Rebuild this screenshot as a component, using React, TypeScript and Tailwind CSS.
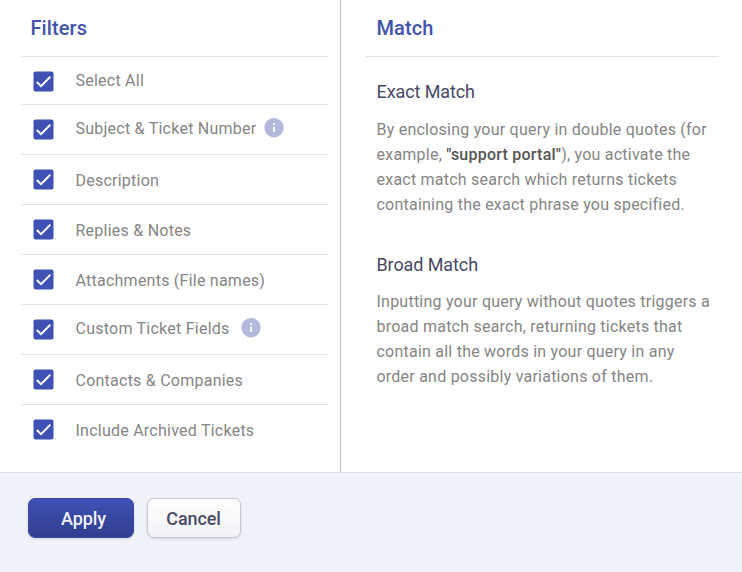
type Filter = { label: string; info?: string; row: string; text: string };

const filters: Filter[] = [
  { label: 'Select All', row: 'h-12 pt-px', text: '' },
  { label: 'Subject & Ticket Number', info: 'ml-2 mb-px', row: 'h-[50px]', text: 'pb-[2px]' },
  { label: 'Description', row: 'h-[50px]', text: 'pt-[2px]' },
  { label: 'Replies & Notes', row: 'h-[50px]', text: 'pt-[2px]' },
  { label: 'Attachments (File names)', row: 'h-[50px]', text: 'pt-[2px]' },
  { label: 'Custom Ticket Fields', info: 'ml-[11.5px] mb-px', row: 'h-[50px]', text: 'pb-[2px]' },
  { label: 'Contacts & Companies', row: 'h-[50px]', text: 'pt-[2px]' },
  { label: 'Include Archived Tickets', row: 'h-[50px]', text: 'pt-[2px]' },
];

function Checkbox() {
  return (
    <svg viewBox="0 0 21 21" className="size-[21px] shrink-0" fill="none">
      <rect x="0.5" y="0.5" width="20" height="20" rx="2" fill="#3f51b5" />
      <path d="M3.8 11L8 15.1L17.3 5.7" stroke="#fff" strokeWidth="2" />
    </svg>
  );
}

function InfoIcon({ className }: { className: string }) {
  return (
    <svg viewBox="0 0 20 20" className={`size-5 shrink-0 ${className}`}>
      <circle cx="10" cy="9.7" r="9.7" fill="#b3b9dd" />
      <path d="M9.1 5h1.8v1.8H9.1zM9.1 8.6h1.8v5.5H9.1z" fill="#fff" />
    </svg>
  );
}

export default function App() {
  return (
    <div className="flex h-[572px] w-[742px] flex-col overflow-hidden bg-white font-[Roboto,sans-serif] text-base text-[#858585]">
      <div className="flex h-[472px]">
        <section className="w-[341px] border-r border-[#bfbfbf] pr-3 pl-[21px]">
          <h2 className="h-[56px] pt-3.5 pl-[9.5px] text-xl leading-7 font-medium tracking-[0.1px] text-[#4353ab]">Filters</h2>
          <ul>
            {filters.map((f) => (
              <li key={f.label} className={`flex items-center border-t border-[#e3e3e3] pl-3 ${f.row}`}>
                <Checkbox />
                <div className={`flex items-center pl-[21.5px] ${f.text}`}>
                  <span className="tracking-[0.24px]">{f.label}</span>
                  {f.info && <InfoIcon className={f.info} />}
                </div>
              </li>
            ))}
          </ul>
        </section>
        <section className="flex-1 pr-[23px] pl-[25px]">
          <h2 className="h-[57px] border-b border-[#e3e3e3] pt-3.5 pl-[10.5px] text-xl leading-7 font-medium tracking-[0.1px] text-[#4353ab]">Match</h2>
          <div className="-mr-4 pl-[10.5px]">
            <h3 className="pt-[22px] text-lg leading-[26px] tracking-[-0.1px] text-[#484865]">Exact Match</h3>
            <p className="pt-3 leading-[25px] tracking-[0.23px]">
              By enclosing your query in double quotes (for
              <br />
              example, <strong className="font-medium text-[#555]">"support portal"</strong>), you activate the
              <br />
              exact match search which returns tickets
              <br />
              containing the exact phrase you specified.
            </p>
            <h3 className="pt-[35px] text-lg leading-[26px] tracking-[-0.1px] text-[#484865]">Broad Match</h3>
            <p className="pt-[11px] leading-[25px] tracking-[0.23px]">
              Inputting your query without quotes triggers a
              <br />
              broad match search, returning tickets that
              <br />
              contain all the words in your query in any
              <br />
              order and possibly variations of them.
            </p>
          </div>
        </section>
      </div>
      <footer className="flex flex-1 items-start gap-[13px] border-t border-[#dfe1e6] bg-[#f0f2f8] pt-[25px] pl-7 text-lg font-medium tracking-[-0.1px]">
        <button className="h-10 w-[106px] rounded-[7px] border border-[#3949a5] bg-linear-to-b from-[#3f51b5] to-[#303f8f] pt-0.5 pl-[5px] text-[#eef0fb] shadow-sm">
          Apply
        </button>
        <button className="h-10 w-[94px] rounded-[7px] border border-[#c5c6d8] bg-linear-to-b from-white to-[#f1f2f6] pt-0.5 pr-px text-[#4b4b66] shadow-sm">
          Cancel
        </button>
      </footer>
    </div>
  );
}
